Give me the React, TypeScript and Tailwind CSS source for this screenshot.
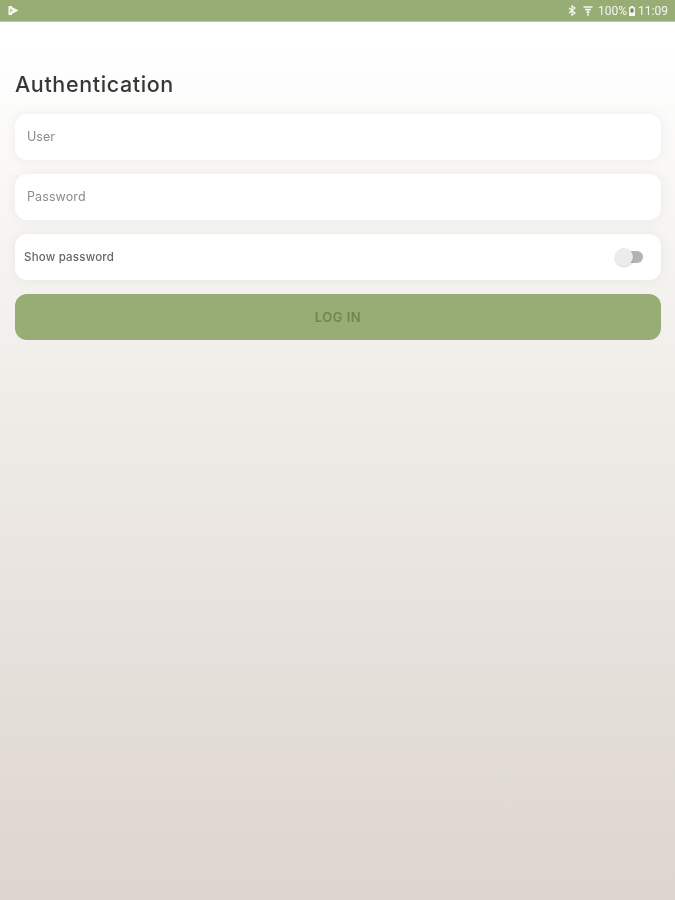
import React from "react";

function StatusBar() {
  return (
    <div className="h-[22px] border-b border-[#b9c8a2] bg-[#97ad75] flex items-center justify-between pl-2 pr-[7px] text-white/90 font-['Roboto',sans-serif] text-[12px] leading-none shrink-0">
      <svg width="11" height="11" viewBox="0 0 11 11" className="blur-[0.5px]">
        <path d="M0.5 1h3.5v9H0.5z" fill="#f4f6ef" />
        <path d="M4 2l6.5 3.5L4 9z" fill="#f4f6ef" />
        <path d="M2 3.5v4l3-2z" fill="#b9c8a2" />
      </svg>
      <div className="flex items-center blur-[0.5px]">
        <svg width="8" height="11" viewBox="0 0 8 11" className="mr-[7px]" fill="none" stroke="#f4f6ef" strokeWidth="1.2">
          <path d="M1 3l6 5-3 2.2V.8L7 3 1 8" />
        </svg>
        <svg width="10" height="10" viewBox="0 0 10 10" className="mr-[5px]" fill="none" stroke="#f4f6ef" strokeWidth="1.3">
          <path d="M0.5 1h9M2 3.5h6M5 3.5V10M3.5 6h3" />
        </svg>
        <span>100%</span>
        <svg width="6" height="10" viewBox="0 0 6 10" className="ml-[2px] mr-[3px]">
          <path d="M0 1.2h1.5V0h3v1.2H6V10H0z" fill="#f4f6ef" />
          <path d="M1.5 2.5h3v4h-3z" fill="#6f7f5a" />
        </svg>
        <span>11:09</span>
      </div>
    </div>
  );
}

function Card({ children }: { children: React.ReactNode }) {
  return (
    <div className="h-[46px] rounded-[12px] bg-white shadow-[0_0_12px_rgba(120,115,105,0.1)] flex items-center">
      {children}
    </div>
  );
}

export default function App() {
  return (
    <div className="w-[675px] h-[900px] overflow-hidden flex flex-col bg-gradient-to-b from-white from-[5%] via-[#efece8] via-[45%] to-[#ddd5cf] font-['Inter',sans-serif]">
      <StatusBar />
      <main className="flex flex-col pl-[15px] pr-[14px]">
        <h1 className="mt-[49px] mb-[17px] text-[21.5px] leading-[26px] font-medium text-[#383836] tracking-[0.62px] blur-[0.4px]">
          Authentication
        </h1>
        <div className="flex flex-col gap-[14px]">
          <Card>
            <span className="pl-3 text-[12.5px] text-[#8b8b8b] blur-[0.4px]">User</span>
          </Card>
          <Card>
            <span className="pl-3 text-[12.5px] tracking-[0.1px] text-[#8b8b8b] blur-[0.4px]">Password</span>
          </Card>
          <Card>
            <div className="flex w-full items-center justify-between pl-[9px] pr-[18px]">
              <span className="mt-[2px] text-[11.5px] tracking-[0.2px] font-medium text-[#666666] blur-[0.4px]">Show password</span>
              <div className="relative w-[28px] h-[18px] flex items-center">
                <div className="ml-[3px] w-[25px] h-[12px] rounded-full bg-[#b3b3b1]" />
                <div className="absolute left-0 top-0 w-[18px] h-[18px] rounded-full bg-[#ececec] shadow-[0_1px_2px_rgba(0,0,0,0.2)]" />
              </div>
            </div>
          </Card>
          <button className="h-[46px] rounded-[12px] bg-[#97ad75] flex items-center justify-center pt-[2px] text-[13px] font-semibold tracking-[0.5px] text-[#6f8553] blur-[0.4px]">
            LOG IN
          </button>
        </div>
      </main>
    </div>
  );
}
